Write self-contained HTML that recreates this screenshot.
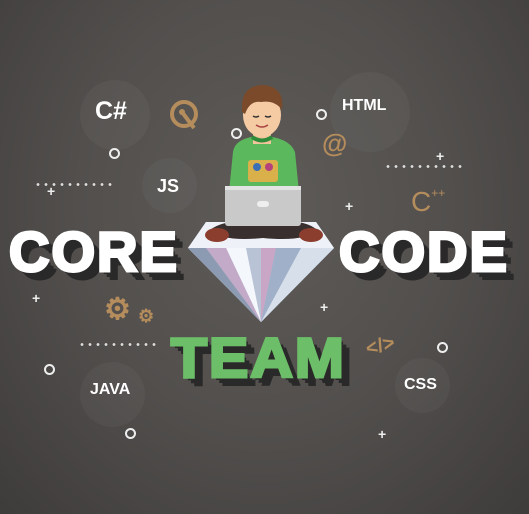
<!DOCTYPE html>
<html><head><meta charset="utf-8"><style>
html,body{margin:0;padding:0}
body{width:529px;height:514px;overflow:hidden;position:relative;font-family:"Liberation Sans",sans-serif;
background:radial-gradient(ellipse at 50% 40%,#5e5b58 0%,#524f4d 50%,#3e3c3b 100%);}
.t{position:absolute;color:#fff;font-weight:bold;white-space:nowrap}
.big{font-size:56px;letter-spacing:2px;-webkit-text-stroke:3px #fff;text-shadow:3px 3px 0 #2a2929,6px 6px 0 #2a2929,9px 9px 0 #2a2929;line-height:1;transform-origin:left}
.bub{position:absolute;border-radius:50%;background:rgba(255,255,255,.035)}
.o{position:absolute;width:7px;height:7px;border:2px solid #eee;border-radius:50%}
.p{position:absolute;color:#eee;font-size:14px;font-weight:bold;line-height:1}
.d{position:absolute;height:3px;background:radial-gradient(circle,#ddd 1.2px,transparent 1.6px) 0 0/8px 3px}
.or{position:absolute;color:#b58d5c;font-weight:bold}
</style></head><body>
<div class="bub" style="left:80px;top:80px;width:70px;height:70px"></div>
<div class="bub" style="left:142px;top:158px;width:55px;height:55px"></div>
<div class="bub" style="left:330px;top:72px;width:80px;height:80px"></div>
<div class="bub" style="left:80px;top:362px;width:65px;height:65px"></div>
<div class="bub" style="left:395px;top:358px;width:55px;height:55px"></div>

<div class="t" style="left:95px;top:97px;font-size:25px">C#</div>
<div class="t" style="left:157px;top:176px;font-size:18px">JS</div>
<div class="t" style="left:342px;top:97px;font-size:16px">HTML</div>
<div class="t" style="left:90px;top:381px;font-size:16px">JAVA</div>
<div class="t" style="left:404px;top:376px;font-size:16px">CSS</div>

<div class="d" style="left:34px;top:183px;width:78px"></div>
<div class="d" style="left:384px;top:165px;width:78px"></div>
<div class="d" style="left:78px;top:343px;width:78px"></div>

<div class="o" style="left:109px;top:148px"></div>
<div class="o" style="left:316px;top:109px"></div>
<div class="o" style="left:231px;top:128px"></div>
<div class="o" style="left:437px;top:342px"></div>
<div class="o" style="left:44px;top:364px"></div>
<div class="o" style="left:125px;top:428px"></div>

<div class="p" style="left:47px;top:184px">+</div>
<div class="p" style="left:436px;top:149px">+</div>
<div class="p" style="left:345px;top:199px">+</div>
<div class="p" style="left:32px;top:291px">+</div>
<div class="p" style="left:320px;top:300px">+</div>
<div class="p" style="left:378px;top:427px">+</div>

<svg style="position:absolute;left:168px;top:98px" width="34" height="36" viewBox="0 0 34 36"><circle cx="16" cy="16" r="12" fill="none" stroke="#b58d5c" stroke-width="4"/><line x1="14" y1="14" x2="26" y2="30" stroke="#b58d5c" stroke-width="4"/><circle cx="14" cy="14" r="3" fill="#b58d5c"/></svg>
<div class="or" style="left:322px;top:128px;font-size:26px">@</div>
<div class="or" style="left:411px;top:186px;font-size:28px;font-weight:normal">C<span style="font-size:12px;vertical-align:top">++</span></div>
<div class="or" style="left:104px;top:292px;font-size:30px">⚙</div>
<div class="or" style="left:138px;top:306px;font-size:18px">⚙</div>
<div class="or" style="left:366px;top:335px;font-size:20px;transform:rotate(-15deg)">&lt;/&gt;</div>

<svg style="position:absolute;left:186px;top:218px" width="150" height="106" viewBox="0 0 150 106">
<polygon points="20,4 130,4 148,30 75,104 2,30" fill="#dfe6f0"/>
<polygon points="2,30 148,30 75,104" fill="#b9c3d6"/>
<polygon points="40,30 75,104 60,30" fill="#f4f7fb"/>
<polygon points="75,30 90,30 75,104" fill="#c9a6c6"/>
<polygon points="90,30 115,30 75,104" fill="#9fb0c8"/>
<polygon points="20,30 40,30 75,104" fill="#c2aac8"/>
<polygon points="115,30 148,30 75,104" fill="#d7dfea"/>
<polygon points="2,30 20,30 75,104" fill="#8c9bb2"/>
<polygon points="20,4 130,4 148,30 2,30" fill="#eef2f8"/>
</svg>

<svg style="position:absolute;left:205px;top:82px" width="120" height="170" viewBox="0 0 120 170">
<path d="M28 70 Q30 55 57 54 Q84 55 90 70 L95 120 L23 120 Z" fill="#5cb85c"/>
<rect x="48" y="50" width="18" height="12" fill="#f2c49b"/>
<path d="M47 55 Q57 62 67 55" stroke="#2e8b3a" stroke-width="4" fill="none"/>
<ellipse cx="57" cy="33" rx="19" ry="22" fill="#f5cba3"/>
<path d="M37 30 Q35 4 57 3 Q80 4 77 28 Q70 18 56 20 Q45 18 40 32 Z" fill="#7a4a2a"/>
<path d="M48 34 q3 2 6 0 M60 34 q3 2 6 0" stroke="#333" stroke-width="1.5" fill="none"/>
<path d="M51 43 q6 4 12 0" stroke="#a44" stroke-width="1.5" fill="none"/>
<rect x="43" y="78" width="30" height="22" rx="3" fill="#d9b04a"/>
<circle cx="52" cy="85" r="4" fill="#3b6fb5"/><circle cx="64" cy="85" r="4" fill="#b5427c"/>
<path d="M5 148 Q20 136 58 140 Q100 136 112 148 Q100 160 58 156 Q18 160 5 148 Z" fill="#3a2f2f"/>
<ellipse cx="12" cy="153" rx="12" ry="7" fill="#8c3e2e"/>
<ellipse cx="106" cy="153" rx="12" ry="7" fill="#8c3e2e"/>
<rect x="20" y="104" width="76" height="40" rx="3" fill="#c9c9c9"/>
<rect x="20" y="104" width="76" height="4" fill="#e3e3e3"/>
<rect x="52" y="119" width="12" height="6" rx="3" fill="#eee"/>
</svg>

<div class="t big" style="left:9px;top:224px">CORE</div>
<div class="t big" style="left:339px;top:224px">CODE</div>
<div class="t big" style="left:171px;top:330px;color:#6cbf68;-webkit-text-stroke:3px #6cbf68;transform:scaleX(1.05)">TEAM</div>
</body></html>
